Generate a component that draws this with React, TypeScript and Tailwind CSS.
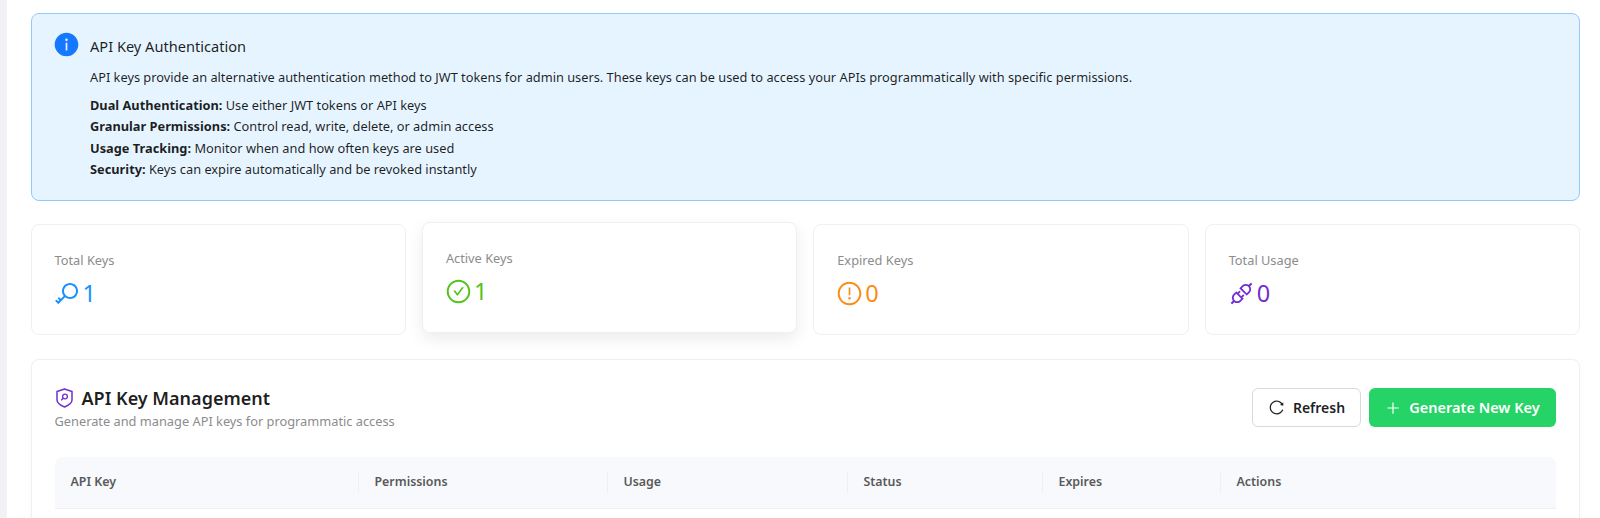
import { ReactNode } from "react"
import {
    AiFillInfoCircle,
    AiOutlineApi,
    AiOutlineCheckCircle,
    AiOutlineExclamationCircle,
    AiOutlineKey,
    AiOutlinePlus,
    AiOutlineReload,
} from "react-icons/ai"

const font = "font-['Noto_Sans',sans-serif]"

function StatCard({
    label,
    value,
    icon,
    color,
    lifted,
}: {
    label: string
    value: string
    icon: ReactNode
    color: string
    lifted?: boolean
}) {
    return (
        <div
            className={
                lifted
                    ? "h-[111px] rounded-lg border border-[#f0f0f0] bg-white px-[23px] pt-[24px] -translate-y-0.5 shadow-[0_6px_16px_rgba(0,0,0,0.08)]"
                    : "h-[111px] rounded-lg border border-[#f0f0f0] bg-white px-[23px] pt-[24px]"
            }
        >
            <div className="text-[12.8px] leading-[22px] text-[#8c8c8c]">{label}</div>
            <div className={`mt-[6px] -ml-px flex items-center gap-[2px] text-[23.5px] leading-8 ${color}`}>
                {icon}
                <span>{value}</span>
            </div>
        </div>
    )
}

const columns = [
    { name: "API Key", width: "w-[304px]" },
    { name: "Permissions", width: "w-[249px]" },
    { name: "Usage", width: "w-[240px]" },
    { name: "Status", width: "w-[195px]" },
    { name: "Expires", width: "w-[178px]" },
    { name: "Actions", width: "flex-1" },
]

export default function App() {
    return (
        <div className={`${font} flex h-[518px] overflow-hidden bg-white`}>
            <div className="w-[7px] shrink-0 bg-[#f0f2f5]" />

            <main className="flex-1 pl-[23.5px] pr-[20px] pt-[13px]">
                {/* Info alert */}
                <section className="flex h-[188px] gap-[10px] rounded-lg border border-[#91caff] bg-[#e6f4ff] pl-[21.5px] pt-[20px]">
                    <AiFillInfoCircle className="-mt-[3px] size-[27px] shrink-0 text-[#1677ff]" />
                    <div>
                        <h2 className="text-[14.6px] leading-[24px] text-[#000000e0]">
                            API Key Authentication
                        </h2>
                        <p className="mt-[9px] text-[12.8px] leading-[20px] text-[#000000e0]">
                            API keys provide an alternative authentication method to JWT tokens for admin users. These keys can be used to access your APIs programmatically with specific permissions.
                        </p>
                        <div className="mt-[8px] text-[12.8px] leading-[21.4px] text-[#000000e0]">
                            <div><strong className="font-bold">Dual Authentication:</strong> Use either JWT tokens or API keys</div>
                            <div><strong className="font-bold">Granular Permissions:</strong> Control read, write, delete, or admin access</div>
                            <div><strong className="font-bold">Usage Tracking:</strong> Monitor when and how often keys are used</div>
                            <div><strong className="font-bold">Security:</strong> Keys can expire automatically and be revoked instantly</div>
                        </div>
                    </div>
                </section>

                {/* Stats */}
                <section className="mt-[23px] grid grid-cols-4 gap-4">
                    <StatCard label="Total Keys" value="1" color="text-[#1890ff]" icon={<AiOutlineKey className="size-[27px]" />} />
                    <StatCard label="Active Keys" value="1" color="text-[#52c41a]" lifted icon={<AiOutlineCheckCircle className="size-[27px]" />} />
                    <StatCard label="Expired Keys" value="0" color="text-[#fa8c16]" icon={<AiOutlineExclamationCircle className="size-[27px]" />} />
                    <StatCard label="Total Usage" value="0" color="text-[#722ed1]" icon={<AiOutlineApi className="size-[27px]" />} />
                </section>

                {/* Management panel */}
                <section className="mt-[24px] h-[200px] rounded-lg border border-[#f0f0f0] bg-white px-[23px] pt-[28px] shadow-[0_1px_4px_rgba(0,0,0,0.03)]">
                    <div className="flex items-start justify-between">
                        <div className="-mt-[2px]">
                            <div className="flex items-center gap-[9px]">
                                <svg viewBox="0 0 17 20" className="ml-px h-[20px] w-[17px] text-[#722ed1]" fill="none" stroke="currentColor">
                                    <path d="M8.5 1 16 3.5v8.5c0 3-4 5.5-7.5 7C5 17.5 1 15 1 12V3.5z" strokeWidth="1.5" strokeLinejoin="round" />
                                    <circle cx="9" cy="8.5" r="2.4" strokeWidth="1.3" />
                                    <path d="M7.2 10.3 5.2 12.3" strokeWidth="1.3" />
                                </svg>
                                <h1 className="text-[18px] font-semibold leading-[24px] text-[#000000e0]">API Key Management</h1>
                            </div>
                            <p className="mt-[1px] text-[12.8px] leading-[20px] text-[#8c8c8c]">
                                Generate and manage API keys for programmatic access
                            </p>
                        </div>
                        <div className="flex gap-2">
                            <button className="flex h-[39px] w-[109px] items-center justify-center gap-2 rounded-md border border-[#d9d9d9] bg-white text-[14px] font-semibold text-[#000000e0]">
                                <AiOutlineReload className="size-[17px]" />
                                Refresh
                            </button>
                            <button className="flex h-[39px] w-[187px] items-center justify-center gap-2 rounded-md bg-[#25d366] text-[14.5px] font-semibold text-white">
                                <AiOutlinePlus className="size-4" />
                                Generate New Key
                            </button>
                        </div>
                    </div>

                    <div className="mt-[26px] flex h-[52px] items-center rounded-t-lg border-b border-[#f0f0f0] bg-[#f8f9fc]">
                        {columns.map((col, idx) => (
                            <div key={col.name} className={`relative pl-[16px] text-[12.4px] font-semibold text-[#595959] ${col.width}`}>
                                {col.name}
                                {idx < columns.length - 1 && (
                                    <span className="absolute right-0 top-1/2 h-[22px] w-px -translate-y-1/2 bg-[#f0f0f0]" />
                                )}
                            </div>
                        ))}
                    </div>
                </section>
            </main>
        </div>
    )
}
